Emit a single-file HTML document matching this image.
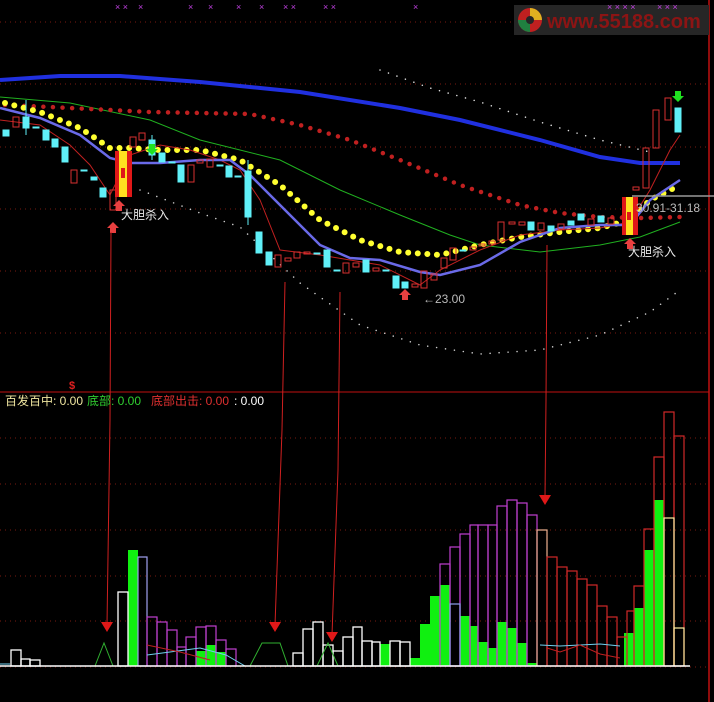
<!DOCTYPE html>
<html><head><meta charset="utf-8"><style>
html,body{margin:0;padding:0;background:#000;width:714px;height:702px;overflow:hidden}
svg{display:block}
text{font-family:"Liberation Sans","Noto Sans CJK SC",sans-serif}
</style></head><body>
<svg width="714" height="702" viewBox="0 0 714 702" xmlns="http://www.w3.org/2000/svg">
<rect width="714" height="702" fill="#000"/>
<g stroke="#7a1a10" stroke-width="1" stroke-dasharray="1 4">
<line x1="0" y1="22" x2="709" y2="22"/><line x1="0" y1="84" x2="709" y2="84"/><line x1="0" y1="147" x2="709" y2="147"/><line x1="0" y1="209" x2="709" y2="209"/><line x1="0" y1="271" x2="709" y2="271"/><line x1="0" y1="333" x2="709" y2="333"/>
<line x1="0" y1="438" x2="709" y2="438"/><line x1="0" y1="484" x2="709" y2="484"/><line x1="0" y1="530" x2="709" y2="530"/><line x1="0" y1="576" x2="709" y2="576"/><line x1="0" y1="621" x2="709" y2="621"/><line x1="0" y1="667" x2="709" y2="667"/>
</g>
<line x1="709" y1="0" x2="709" y2="702" stroke="#c01010" stroke-width="1.5"/>
<line x1="0" y1="392" x2="709" y2="392" stroke="#c01010" stroke-width="1"/>
<text x="69" y="389" fill="#e02020" font-size="11" font-weight="bold">$</text>
<!-- logo -->
<rect x="514" y="5" width="195" height="30" fill="#262626"/>
<circle cx="530" cy="20" r="12" fill="#c02020"/><path d="M530 8 A12 12 0 0 1 542 20 L530 20 Z" fill="#e0b020"/><path d="M518 20 A12 12 0 0 0 530 32 L530 20Z" fill="#208040"/><circle cx="530" cy="20" r="4" fill="#262626"/>
<text x="547" y="28" fill="#8c1414" font-size="20" font-weight="bold" font-family="Liberation Sans">www.55188.com</text>
<!-- magenta markers -->
<g fill="#c040e0" font-size="9"><text x="115" y="10">× ×</text><text x="138" y="10">×</text><text x="188" y="10">×</text><text x="208" y="10">×</text><text x="236" y="10">×</text><text x="259" y="10">×</text><text x="283" y="10">× ×</text><text x="323" y="10">× ×</text><text x="413" y="10">×</text><text x="607" y="10">× × × ×</text><text x="657" y="10">× × ×</text></g>
<!-- white dotted curves -->
<polyline points="380,70 430,88 480,102 540,122 600,140 650,152" fill="none" stroke="#ddd" stroke-width="1.6" stroke-dasharray="0 9" stroke-linecap="round"/>
<polyline points="140,190 200,213 240,227 300,283 360,325 420,345 480,354 540,350 600,335 650,312 680,290" fill="none" stroke="#ccc" stroke-width="1.6" stroke-dasharray="0 9" stroke-linecap="round"/>
<!-- blue thick -->
<polyline points="0,80 60,76 120,76 200,82 300,92 400,108 460,120 540,140 600,157 640,163 680,163" fill="none" stroke="#2030e0" stroke-width="4"/>
<!-- green thin -->
<polyline points="0,97 70,103 150,120 200,140 280,160 340,190 400,215 450,235 480,245 540,252 600,245 640,237 680,222" fill="none" stroke="#20b020" stroke-width="1"/>
<!-- red dotted -->
<polyline points="5,105 50,107 150,112 250,114 300,125 350,140 400,160 460,185 520,205 560,213 600,217 640,218 680,217" fill="none" stroke="#c02020" stroke-width="4.5" stroke-dasharray="0 9.6" stroke-linecap="round"/>
<!-- yellow dotted -->
<polyline points="5,103 40,112 80,128 110,148 130,148 160,150 200,150 240,160 280,185 320,220 360,240 400,252 440,255 480,245 520,237 560,232 600,228 630,220 650,200 680,185" fill="none" stroke="#ffff30" stroke-width="6" stroke-dasharray="0 9.6" stroke-linecap="round"/>
<!-- thin red MA -->
<polyline points="0,120 40,125 70,145 90,165 110,195 130,155 160,145 190,150 220,160 240,170 260,200 280,250 320,255 380,265 420,285 440,270 480,250 520,235 560,230 600,228 630,222 650,190 670,150 680,135" fill="none" stroke="#c02020" stroke-width="1"/>
<!-- purple/blue MA -->
<polyline points="0,108 40,118 80,135 110,158 130,163 160,163 200,160 230,160 250,175 280,205 320,245 350,258 380,260 420,272 440,275 480,265 520,242 560,228 600,225 630,225 650,200 680,180" fill="none" stroke="#6a6ae8" stroke-width="2.5"/>
<!-- candles: cyan filled -->
<g fill="#60f0f8" stroke="#60f0f8">
<rect x="3" y="130" width="6" height="6"/><rect x="23" y="117" width="6" height="11"/><rect x="33" y="127" width="6" height="1"/><rect x="43" y="130" width="6" height="10"/><rect x="52" y="139" width="6" height="8"/><rect x="62" y="147" width="6" height="15"/><rect x="81" y="170" width="6" height="1"/><rect x="91" y="177" width="6" height="3"/><rect x="100" y="188" width="6" height="9"/>
<rect x="149" y="140" width="6" height="15"/><rect x="159" y="153" width="6" height="9"/><rect x="169" y="162" width="6" height="1"/><rect x="178" y="165" width="6" height="17"/><rect x="217" y="165" width="6" height="1"/><rect x="226" y="166" width="6" height="11"/><rect x="235" y="176" width="6" height="1"/><rect x="245" y="171" width="6" height="46"/><rect x="256" y="232" width="6" height="21"/><rect x="266" y="252" width="6" height="13"/><rect x="314" y="253" width="6" height="1"/><rect x="324" y="250" width="6" height="17"/><rect x="334" y="270" width="6" height="1"/><rect x="363" y="260" width="6" height="12"/><rect x="383" y="270" width="6" height="1"/><rect x="393" y="276" width="6" height="12"/><rect x="402" y="282" width="6" height="6"/><rect x="460" y="250" width="6" height="1"/><rect x="528" y="222" width="6" height="8"/><rect x="548" y="226" width="6" height="5"/><rect x="568" y="221" width="6" height="4"/><rect x="578" y="214" width="6" height="6"/><rect x="598" y="216" width="6" height="6"/><rect x="675" y="108" width="6" height="24"/>
</g>
<g stroke="#60f0f8" stroke-width="1"><line x1="248" y1="160" x2="248" y2="225"/><line x1="26" y1="100" x2="26" y2="135"/><line x1="152" y1="135" x2="152" y2="160"/></g>
<!-- candles: red hollow -->
<g fill="none" stroke="#d83030" stroke-width="1">
<rect x="13" y="117" width="6" height="10"/><rect x="71" y="170" width="6" height="13"/><rect x="110" y="190" width="6" height="20"/><rect x="130" y="137" width="6" height="10"/><rect x="139" y="133" width="6" height="7"/><rect x="188" y="165" width="6" height="17"/><rect x="197" y="160" width="6" height="3"/><rect x="207" y="159" width="6" height="8"/><rect x="275" y="255" width="6" height="12"/><rect x="285" y="258" width="6" height="3"/><rect x="294" y="252" width="6" height="6"/><rect x="304" y="252" width="6" height="2"/><rect x="343" y="263" width="6" height="10"/><rect x="353" y="263" width="6" height="4"/><rect x="373" y="268" width="6" height="3"/><rect x="412" y="284" width="6" height="3"/><rect x="421" y="271" width="6" height="17"/><rect x="431" y="274" width="6" height="6"/><rect x="441" y="258" width="6" height="10"/><rect x="450" y="248" width="6" height="12"/><rect x="470" y="247" width="6" height="3"/><rect x="479" y="244" width="6" height="2"/><rect x="489" y="241" width="6" height="3"/><rect x="498" y="222" width="6" height="18"/><rect x="509" y="222" width="6" height="2"/><rect x="519" y="222" width="6" height="3"/><rect x="538" y="223" width="6" height="7"/><rect x="558" y="224" width="6" height="5"/><rect x="588" y="219" width="6" height="6"/><rect x="608" y="218" width="6" height="6"/><rect x="633" y="187" width="6" height="3"/><rect x="643" y="148" width="6" height="40"/><rect x="653" y="110" width="6" height="38"/><rect x="665" y="98" width="6" height="22"/>
</g>
<!-- signal boxes -->
<rect x="115" y="151" width="17" height="46" fill="#e01818"/><rect x="119" y="151" width="8" height="46" fill="#ffe020"/><rect x="121" y="168" width="4" height="10" fill="#e01818"/>
<rect x="622" y="197" width="16" height="38" fill="#e01818"/><rect x="626" y="197" width="7" height="38" fill="#ffe020"/><rect x="627" y="212" width="4" height="8" fill="#e01818"/>
<!-- arrows -->
<g fill="#e84040"><path d="M119,200 l6,6 h-3 v5 h-6 v-5 h-3z"/><path d="M113,222 l6,6 h-3 v5 h-6 v-5 h-3z"/><path d="M405,289 l6,6 h-3 v5 h-6 v-5 h-3z"/><path d="M630,238 l6,6 h-3 v5 h-6 v-5 h-3z"/></g>
<g fill="#20e020"><path d="M152,155 l6,-6 h-3 v-5 h-6 v5 h-3z"/><path d="M678,102 l6,-6 h-3 v-5 h-6 v5 h-3z"/></g>
<line x1="632" y1="196" x2="714" y2="196" stroke="#999" stroke-width="1.5"/>
<g fill="#e8e8e8" font-size="12"><text x="121" y="219">大胆杀入</text><text x="628" y="256">大胆杀入</text></g>
<text x="423" y="303" fill="#bbb" font-size="12">←23.00</text>
<text x="636" y="212" fill="#bbb" font-size="12">30.91-31.18</text>
<!-- long red arrow lines -->
<g stroke="#d02020" stroke-width="1"><polyline points="111,232 110,420 107,625" fill="none"/><polyline points="285,282 282,430 275,625" fill="none"/><polyline points="340,292 338,470 332,635" fill="none"/><polyline points="547,245 546,400 545,497" fill="none"/></g>
<g fill="#e01818"><path d="M101,622 h12 l-6,10z"/><path d="M269,622 h12 l-6,10z"/><path d="M326,632 h12 l-6,10z"/><path d="M539,495 h12 l-6,10z"/></g>
<!-- legend -->
<g font-size="12"><text x="5" y="405" fill="#f0e6a0">百发百中: 0.00</text><text x="87" y="405" fill="#30d030">底部: 0.00</text><text x="151" y="405" fill="#e03030">底部出击: 0.00</text><text x="234" y="405" fill="#fff">: 0.00</text></g>
<!-- lower panel -->
<g fill="#10f010">
<rect x="128" y="550" width="10" height="116"/><rect x="196" y="651" width="10" height="15"/><rect x="206" y="645" width="10" height="21"/><rect x="216" y="652" width="10" height="14"/><rect x="380" y="644" width="10" height="22"/>
<rect x="410" y="658" width="10" height="8"/><rect x="420" y="624" width="10" height="42"/><rect x="430" y="596" width="10" height="70"/><rect x="440" y="585" width="10" height="81"/><rect x="460" y="616" width="10" height="50"/><rect x="470" y="626" width="8" height="40"/><rect x="478" y="642" width="10" height="24"/><rect x="488" y="648" width="9" height="18"/><rect x="497" y="622" width="10" height="44"/><rect x="507" y="628" width="10" height="38"/><rect x="517" y="643" width="10" height="23"/><rect x="527" y="663" width="10" height="3"/>
<rect x="624" y="633" width="10" height="33"/><rect x="634" y="608" width="10" height="58"/><rect x="644" y="550" width="10" height="116"/><rect x="654" y="500" width="10" height="166"/>
</g>
<g fill="none" stroke="#fff" stroke-width="1.3">
<rect x="11" y="650" width="10" height="16"/><rect x="21" y="659" width="9" height="7"/><rect x="30" y="660" width="10" height="6"/><rect x="118" y="592" width="10" height="74"/>
<rect x="293" y="653" width="10" height="13"/><rect x="303" y="629" width="10" height="37"/><rect x="313" y="622" width="10" height="44"/><rect x="323" y="645" width="10" height="21"/><rect x="333" y="651" width="10" height="15"/><rect x="343" y="637" width="10" height="29"/><rect x="353" y="627" width="9" height="39"/><rect x="362" y="641" width="10" height="25"/><rect x="372" y="642" width="8" height="24"/><rect x="390" y="641" width="10" height="25"/><rect x="400" y="642" width="10" height="24"/>
</g>
<rect x="138" y="557" width="9" height="109" fill="none" stroke="#a0a0f0" stroke-width="1.2"/>
<g fill="none" stroke="#c040d0" stroke-width="1.2">
<rect x="147" y="617" width="10" height="49"/><rect x="157" y="622" width="10" height="44"/><rect x="167" y="630" width="10" height="36"/><rect x="177" y="647" width="9" height="19"/><rect x="186" y="637" width="10" height="29"/><rect x="196" y="627" width="10" height="39"/><rect x="206" y="626" width="10" height="40"/><rect x="216" y="640" width="10" height="26"/><rect x="226" y="649" width="10" height="17"/>
<rect x="440" y="564" width="10" height="102"/><rect x="450" y="547" width="10" height="119"/><rect x="460" y="534" width="10" height="132"/><rect x="470" y="525" width="8" height="141"/><rect x="478" y="525" width="10" height="141"/><rect x="488" y="525" width="9" height="141"/><rect x="497" y="506" width="10" height="160"/><rect x="507" y="500" width="10" height="166"/><rect x="517" y="503" width="10" height="163"/><rect x="527" y="515" width="10" height="151"/>
</g>
<rect x="450" y="604" width="10" height="62" fill="none" stroke="#90a0f0" stroke-width="1.2"/>
<rect x="537" y="530" width="10" height="136" fill="none" stroke="#f0b090" stroke-width="1.2"/>
<g fill="none" stroke="#d02828" stroke-width="1.2">
<rect x="547" y="557" width="10" height="109"/><rect x="557" y="567" width="10" height="99"/><rect x="567" y="571" width="10" height="95"/><rect x="577" y="579" width="10" height="87"/><rect x="587" y="585" width="10" height="81"/><rect x="597" y="606" width="10" height="60"/><rect x="607" y="617" width="10" height="49"/><rect x="617" y="637" width="10" height="29"/><rect x="627" y="611" width="7" height="55"/><rect x="634" y="586" width="10" height="80"/><rect x="644" y="529" width="10" height="137"/><rect x="654" y="457" width="10" height="209"/><rect x="664" y="412" width="10" height="254"/><rect x="674" y="436" width="10" height="230"/>
</g>
<g fill="none" stroke="#fff0a0" stroke-width="1.2"><rect x="664" y="518" width="10" height="148"/><rect x="674" y="628" width="10" height="38"/></g>
<g fill="none" stroke-width="1">
<polyline points="95,666 104,643 113,666" stroke="#30b030"/><polyline points="250,666 262,643 280,643 288,666" stroke="#30b030"/><polyline points="317,666 328,643 338,666" stroke="#30b030"/>
<polyline points="147,655 170,652 200,648 226,655 245,666" stroke="#70d0f0"/><polyline points="147,645 180,652 210,660" stroke="#c02020"/>
<polyline points="540,645 560,646 580,645 600,644 620,646" stroke="#70d0f0"/><polyline points="547,648 560,652 580,645 600,654 620,658" stroke="#c02020"/>
<polyline points="0,664 10,664" stroke="#70d0f0"/>
</g>
<line x1="0" y1="666" x2="690" y2="666" stroke="#fff" stroke-width="1.5"/>
</svg>
</body></html>
